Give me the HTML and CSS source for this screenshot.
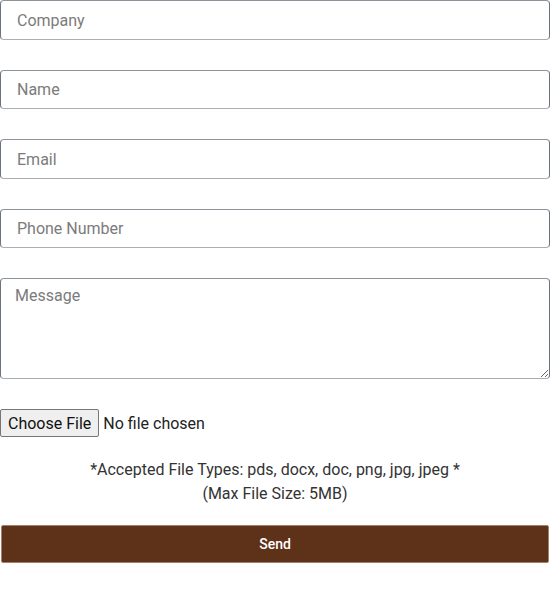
FILE: index.html
```html
<!DOCTYPE html>
<html>
<head>
<meta charset="utf-8">
<link rel="stylesheet" href="styles.css">
</head>
<body>
<form class="form">
  <input class="field" type="text" placeholder="Company">
  <input class="field" type="text" placeholder="Name">
  <input class="field" type="email" placeholder="Email">
  <input class="field" type="tel" placeholder="Phone Number">
  <textarea class="field area" placeholder="Message"></textarea>
  <input class="file" type="file">
  <p class="note">*Accepted File Types: pds, docx, doc, png, jpg, jpeg *<br>(Max File Size: 5MB)</p>
  <button class="send" type="button">Send</button>
</form>
</body>
</html>
```
FILE: styles.css
```css
html, body {
  margin: 0;
  padding: 0;
  background: #fff;
}
.form {
  display: flex;
  flex-direction: column;
  width: 550px;
  font-family: Roboto, "Liberation Sans", sans-serif;
}
.field {
  box-sizing: border-box;
  width: 550px;
  height: 39.5px;
  margin: 0 0 30px 0;
  padding: 1px 16px 0 16px;
  border: 1px solid #6b7280;
  border-top-color: #8d939b;
  border-bottom-color: #a9aeb4;
  border-radius: 4px;
  font-family: Roboto, "Liberation Sans", sans-serif;
  font-size: 16px;
  color: #333;
  background: #fff;
  outline: none;
}
.field::placeholder {
  color: #7b7b7b;
}
.area {
  height: 100.5px;
  padding: 7px 14px;
  margin-bottom: 30.5px;
  resize: vertical;
}
.file {
  font-family: Roboto, "Liberation Sans", sans-serif;
  font-size: 16px;
  color: #222;
  margin: 0;
  height: 28px;
  align-self: flex-start;
}
.file::file-selector-button {
  font-family: Roboto, "Liberation Sans", sans-serif;
  font-size: 16px;
  height: 28px;
  padding: 0 7px;
  margin-right: 4px;
  border: 1px solid #767676;
  border-radius: 2px;
  background: #efefef;
  color: #111;
}
.note {
  margin: 21px 0 0 0;
  text-align: center;
  font-size: 16px;
  line-height: 24px;
  color: #333;
}
.send {
  margin: 19px 0 0 1px;
  width: 548px;
  height: 38px;
  background: #5e3119;
  border: 1px solid #a3816e;
  border-radius: 2px;
  color: #fff;
  font-family: Roboto, "Liberation Sans", sans-serif;
  font-size: 14px;
  font-weight: 500;
}
```
